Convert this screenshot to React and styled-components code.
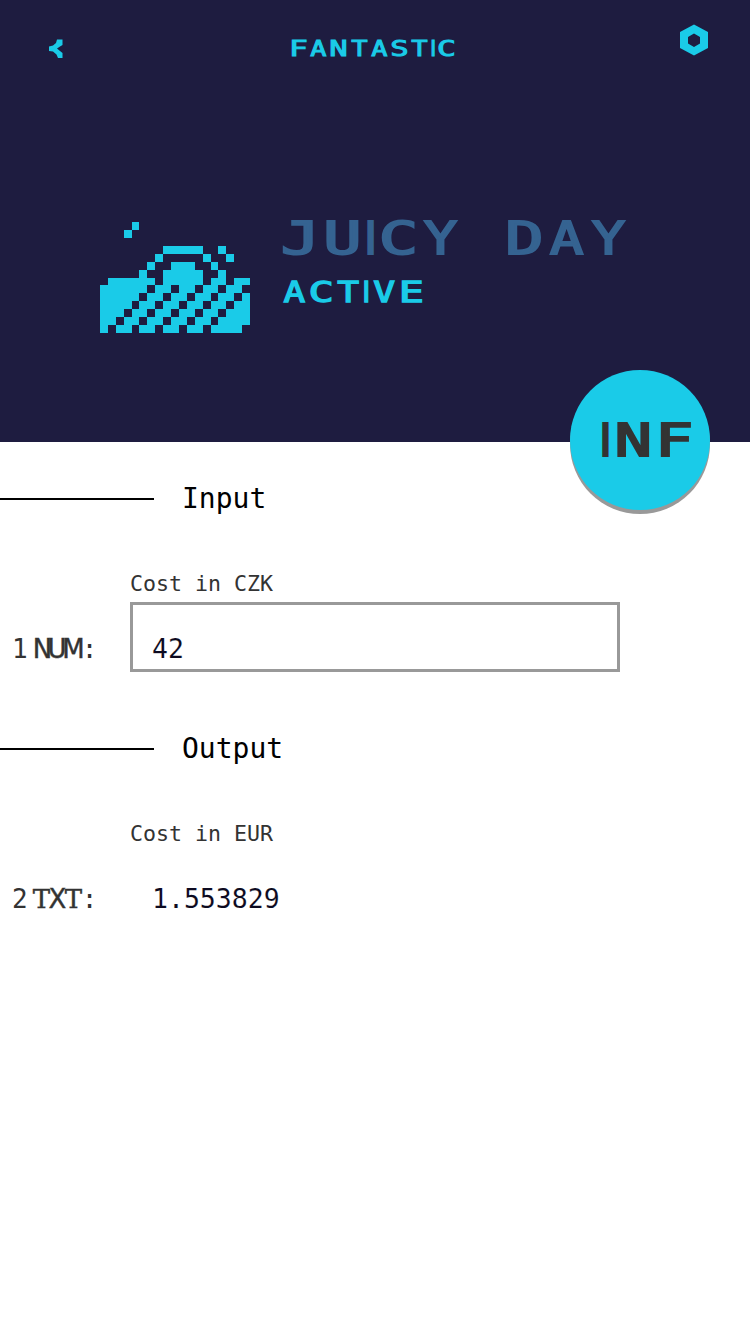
import React from 'react';
import styled, { createGlobalStyle } from 'styled-components';

const Global = createGlobalStyle`
  * { box-sizing: border-box; }
  body { margin: 0; background: #fff; }
`;

const Page = styled.main`
  width: 750px;
  height: 1334px;
  overflow: hidden;
  background: #fff;
  font-family: 'DejaVu Sans Mono', monospace;
  color: #333;
`;

const Hero = styled.header`
  height: 442px;
  background: #1e1c40;
  position: relative;
`;

const TopBar = styled.div`
  display: flex;
  justify-content: space-between;
  align-items: flex-start;
  height: 220px;
  padding: 24px 42px 0 49px;
`;

const BackIcon = styled.svg`
  display: block;
  width: 14px;
  height: 20px;
  margin-top: 15px;
`;

const HexIcon = styled.svg`
  display: block;
  width: 28px;
  height: 32px;
`;

const Title = styled.h1`
  margin: 17px 0 0 2px;
  font-size: inherit;
`;

const Identity = styled.div`
  display: flex;
  align-items: flex-start;
  padding-left: 100px;
`;

const Emblem = styled.svg`
  display: block;
  width: 150px;
  height: 111px;
  margin-top: 2px;
`;

const Names = styled.div`
  display: flex;
  flex-direction: column;
  gap: 25px;
  padding: 1px 0 0 33px;
`;

const Word = styled.span`
  display: flex;
  gap: ${p => p.$unit}px;
  height: ${p => p.$unit * 5}px;
  color: ${p => p.$color};
  font: 400 ${p => p.$unit * 6.4}px/${p => p.$unit * 5}px 'DejaVu Sans Mono', monospace;
  -webkit-text-stroke: ${p => p.$unit * 0.28}px ${p => p.$color};
`;

const Cell = styled.span`
  display: flex;
  justify-content: center;
  white-space: pre;
  width: ${p => p.$unit * (p.$narrow ? 1 : 5)}px;
  font-family: ${p => (p.$narrow ? "'DejaVu Sans', sans-serif" : 'inherit')};
  transform: scaleX(${p => p.$stretch});
`;

const STRETCH = { A: 1.25, C: 1.46, D: 1.42, E: 1.45, F: 1.45, I: 1, J: 1.46, N: 1.42, S: 1.42, T: 1.26, U: 1.42, V: 1.26, Y: 1.24 };

function SquareText({ text, unit, color }) {
  return (
    <Word $unit={unit} $color={color}>
      {[...text].map((ch, i) => (
        <Cell key={i} $unit={unit} $narrow={ch === 'I'} $stretch={STRETCH[ch] || 1}>{ch}</Cell>
      ))}
    </Word>
  );
}

const InfoButton = styled.button`
  position: absolute;
  left: 570px;
  top: 370px;
  width: 140px;
  height: 140px;
  padding: 3px 0 0 13px;
  border: 0;
  border-radius: 50%;
  background: #1acbe8;
  box-shadow: 0 4px 0 #999;
  display: flex;
  align-items: center;
  justify-content: center;
`;

const Section = styled.section`
  height: 250px;
`;

const Heading = styled.h2`
  display: flex;
  align-items: center;
  gap: 28px;
  height: 113px;
  margin: 0;
  font-size: 28px;
  font-weight: 400;
  color: #000;
  &::before {
    content: '';
    width: 154px;
    height: 2px;
    background: #000;
  }
`;

const Field = styled.div`
  display: grid;
  grid-template-columns: 130px 490px;
  grid-template-rows: 47px 70px;
`;

const Caption = styled.label`
  grid-column: 2;
  font-size: 21.6px;
  line-height: 58px;
`;

const Tag = styled.div`
  display: flex;
  align-items: baseline;
  padding-left: 12px;
  font-size: 26px;
  line-height: 95px;
`;

const Kind = styled.span`
  width: 49px;
  margin-left: 5px;
  white-space: nowrap;
  font-family: ${p => (p.$slab ? "'DejaVu Serif', serif" : "'DejaVu Sans', sans-serif")};
  letter-spacing: ${p => (p.$slab ? -1.6 : -4.5)}px;
  -webkit-text-stroke: 0.4px #333;
`;

const Plain = styled.span`
  font-family: 'DejaVu Sans', sans-serif;
`;

const Value = styled.div`
  height: 70px;
  padding-left: 19px;
  border: 3px solid ${p => (p.$boxed ? '#999' : 'transparent')};
  color: #0c0a20;
  font-size: 26.5px;
  line-height: 87px;
  white-space: nowrap;
  -webkit-text-stroke: 0.1px #fff;
`;

const EMBLEM_ROWS = [
  '....#..............',
  '...#...............',
  '...................',
  '........#####..#...',
  '.......#.....#..#..',
  '......#..###..#....',
  '.....#..#####..#...',
  '.######.#####.##.##',
  '######.##.##.##.##.',
  '#####.##.##.##.##.#',
  '####.##.##.##.##.##',
  '###.##.##.##.##.###',
  '##.##.##.##.##.####',
  '#.##.##.##.##.####.',
];

function Landscape() {
  return (
    <Emblem viewBox="0 0 19 14" preserveAspectRatio="none" fill="#1acbe8" shapeRendering="crispEdges">
      {EMBLEM_ROWS.flatMap((row, y) =>
        [...row.matchAll(/#+/g)].map(m => (
          <rect key={`${m.index}-${y}`} x={m.index} y={y} width={m[0].length} height="1" />
        ))
      )}
    </Emblem>
  );
}

function Panel({ title, number, kind, slab, caption, value, boxed }) {
  return (
    <Section>
      <Heading>{title}</Heading>
      <Field>
        <Caption>{caption}</Caption>
        <Tag>{number}<Kind $slab={slab}>{kind}</Kind>:</Tag>
        <Value $boxed={boxed}>{value}</Value>
      </Field>
    </Section>
  );
}

export default function App() {
  return (
    <Page>
      <Global />
      <Hero>
        <TopBar>
          <BackIcon viewBox="0 0 14 20" fill="#1acbe8">
            <path d="M8 .5h5.500v5.500L11 7.500 8 9.500 11 12l2.500 2v5H9l-1.500-3.500L4 12.500 0 12V7.500l4-1L7 4z" />
          </BackIcon>
          <Title><SquareText text="FANTASTIC" unit={3.37} color="#1acbe8" /></Title>
          <HexIcon viewBox="0 0 28 32" fill="#1acbe8" fillRule="evenodd">
            <path d="M14 .5 28 8v16l-14 7.500L0 24V8zM14 9.500 8 13v6.500l6 3.500 6-3.500V13z" />
          </HexIcon>
        </TopBar>
        <Identity>
          <Landscape />
          <Names>
            <SquareText text="JUICY DAY" unit={7} color="#356391" />
            <SquareText text="ACTIVE" unit={4.5} color="#1acbe8" />
          </Names>
        </Identity>
        <InfoButton><SquareText text="INF" unit={6.85} color="#333" /></InfoButton>
      </Hero>
      <Panel title="Input" number="1" kind="NUM" caption="Cost in CZK" value="42" boxed />
      <Panel title="Output" number="2" kind={<>T<Plain>X</Plain>T</>} slab caption="Cost in EUR" value="1.553829" />
    </Page>
  );
}
